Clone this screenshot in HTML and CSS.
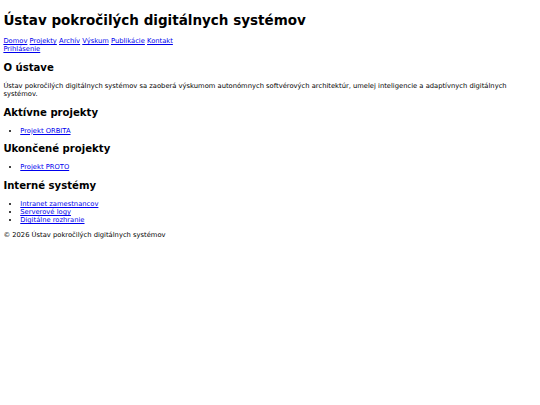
FILE: index.html
```html
<!DOCTYPE html>
<html lang="sk">
<head>
<meta charset="utf-8">
<title>Ústav pokročilých digitálnych systémov</title>
<link rel="stylesheet" href="styles.css">
</head>
<body>
<header class="site-header">
<h1 class="site-title">Ústav pokročilých digitálnych systémov</h1>
<nav class="main-nav">
<div class="nav-links"><a href="#">Domov</a> <a href="#">Projekty</a> <a href="#">Archív</a> <a href="#">Výskum</a> <a href="#">Publikácie</a> <a href="#">Kontakt</a></div>
<div class="nav-login"><a href="#">Prihlásenie</a></div>
</nav>
</header>
<main>
<section>
<h2>O ústave</h2>
<p>Ústav pokročilých digitálnych systémov sa zaoberá výskumom autonómnych softvérových architektúr, umelej inteligencie a adaptívnych digitálnych systémov.</p>
</section>
<section>
<h2>Aktívne projekty</h2>
<ul>
<li><a href="#">Projekt ORBITA</a></li>
</ul>
</section>
<section>
<h2>Ukončené projekty</h2>
<ul>
<li><a href="#">Projekt PROTO</a></li>
</ul>
</section>
<section>
<h2>Interné systémy</h2>
<ul>
<li><a href="#">Intranet zamestnancov</a></li>
<li><a href="#">Serverové logy</a></li>
<li><a href="#">Digitálne rozhranie</a></li>
</ul>
</section>
</main>
<footer class="site-footer">
<p>© 2026 Ústav pokročilých digitálnych systémov</p>
</footer>
</body>
</html>
```
FILE: styles.css
```css
html {
  background: #fff;
}
body {
  margin: 3.375px;
  font-family: "DejaVu Sans", sans-serif;
  font-size: 6.75px;
  line-height: 1.1875;
  color: #000;
}
a {
  color: #0000ee;
}
h1 {
  font-size: 13.5px;
  line-height: 1.1875;
  margin: 0.67em 0;
}
h2 {
  font-size: 10.125px;
  line-height: 1.1667;
  margin: 0.83em 0;
}
p {
  margin: 1em 0;
}
ul {
  margin: 1em 0;
  padding-left: 16.875px;
}
```
